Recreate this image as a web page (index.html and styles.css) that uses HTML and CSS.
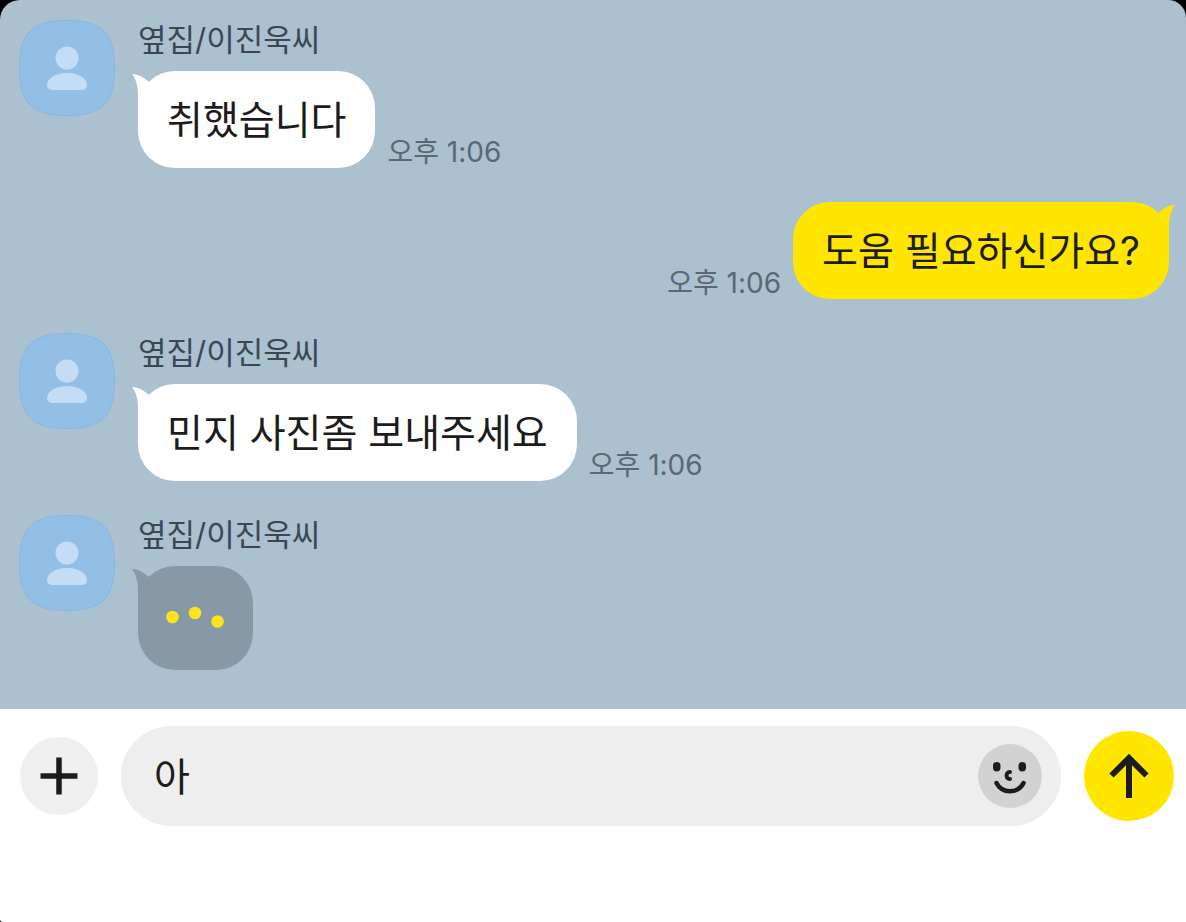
FILE: index.html
```html
<!DOCTYPE html>
<html lang="ko">
<head>
    <meta charset="UTF-8">
    <meta name="viewport" content="width=device-width, initial-scale=1.0">
    <title>옆집/이진욱씨</title>
    <link rel="stylesheet" href="styles.css">
</head>
<body>
    <!-- Shared shapes -->
    <svg class="sprite" aria-hidden="true">
        <symbol id="avatar" viewBox="0 0 96 96">
            <path d="M48 .5C83 .5 95.500 13 95.500 48S83 95.500 48 95.500 .5 83 .5 48 13 .5 48 .5Z" fill="#93bfe7" stroke="#89b6e0"/>
            <circle cx="48" cy="38" r="11.500" fill="#c5dcf5"/>
            <path d="M48 53C36 53 28 59 28 65C28 68.500 30.500 70 34 70H62C65.500 70 68 68.500 68 65C68 59 60 53 48 53Z" fill="#c5dcf5"/>
        </symbol>
        <symbol id="tail" viewBox="0 0 24 36">
            <path d="M0 0C7 0 12 4 17 8L24 18L18 36H6V22C6 12 4 5 0 0Z" fill="currentColor"/>
        </symbol>
    </svg>

    <main class="chat">
        <div class="message">
            <svg class="avatar"><use href="#avatar"/></svg>
            <div class="content">
                <p class="name">옆집/이진욱씨</p>
                <div class="line">
                    <p class="bubble"><svg class="tail"><use href="#tail"/></svg>취했습니다</p>
                    <time class="time">오후 1:06</time>
                </div>
            </div>
        </div>

        <div class="message mine">
            <div class="line">
                <p class="bubble"><svg class="tail"><use href="#tail"/></svg>도움 필요하신가요?</p>
                <time class="time">오후 1:06</time>
            </div>
        </div>

        <div class="message">
            <svg class="avatar"><use href="#avatar"/></svg>
            <div class="content">
                <p class="name">옆집/이진욱씨</p>
                <div class="line">
                    <p class="bubble"><svg class="tail"><use href="#tail"/></svg>민지 사진좀 보내주세요</p>
                    <time class="time">오후 1:06</time>
                </div>
            </div>
        </div>

        <!-- Typing indicator -->
        <div class="message">
            <svg class="avatar"><use href="#avatar"/></svg>
            <div class="content">
                <p class="name">옆집/이진욱씨</p>
                <div class="line">
                    <div class="bubble typing">
                        <svg class="tail"><use href="#tail"/></svg>
                        <svg class="dots" viewBox="0 0 59 24" fill="#fbe41c">
                            <circle cx="6.500" cy="11" r="6.300"/>
                            <circle cx="29" cy="7" r="6.300"/>
                            <circle cx="51.500" cy="15.500" r="6.300"/>
                        </svg>
                    </div>
                </div>
            </div>
        </div>
    </main>

    <form class="composer">
        <button class="plus" type="button" aria-label="추가">
            <svg width="38" height="38" viewBox="0 0 38 38" fill="none" stroke="#1c1c1c" stroke-width="5.500">
                <path d="M19 .5V37.500M.5 19H37.500"/>
            </svg>
        </button>
        <div class="field">
            <input type="text" value="아" aria-label="메시지">
            <button class="emoji" type="button" aria-label="이모티콘">
                <svg width="64" height="64" viewBox="0 0 64 64" fill="none" stroke="#1c1c1c" stroke-width="4" stroke-linecap="round">
                    <rect x="15" y="18" width="7.500" height="9.500" rx="3.700" fill="#1c1c1c" stroke="none"/>
                    <rect x="40.500" y="18" width="7.500" height="9.500" rx="3.700" fill="#1c1c1c" stroke="none"/>
                    <path d="M32 28C27.500 27.500 27.500 35.500 32 35"/>
                    <path d="M18.500 39C24 50 40 50 45.500 39" stroke-width="4.500"/>
                </svg>
            </button>
        </div>
        <button class="send" type="submit" aria-label="전송">
            <svg width="40" height="44" viewBox="0 0 40 44" fill="none" stroke="#1c1c1c" stroke-width="6">
                <path d="M20 4V44M2.500 21.500L20 4L37.500 21.500"/>
            </svg>
        </button>
    </form>
</body>
</html>
```
FILE: styles.css
```css
:root {
    --chat-color: #abc1d0;
    --mine-color: #ffe600;
    --typing-color: #8799a7;
    --text-color: #1c1c1c;
}

* {
    margin: 0;
    padding: 0;
    box-sizing: border-box;
    font-family: Inter, 'Noto Sans CJK KR', sans-serif;
}

body {
    display: flex;
    flex-direction: column;
    min-height: 100vh;
    background: #000;
    color: var(--text-color);
}

.sprite {
    display: none;
}

.chat {
    display: flex;
    flex-direction: column;
    gap: 34px;
    padding: 20px 17px 39px 19px;
    background: var(--chat-color);
    border-radius: 20px 18px 0 0;
}

.message {
    display: flex;
    align-items: flex-start;
    gap: 23px;
}

.avatar {
    flex: none;
    width: 96px;
    height: 96px;
}

.name {
    margin-bottom: 11px;
    font-size: 31px;
    line-height: 40px;
    color: #3b4854;
}

.line {
    display: flex;
    align-items: flex-end;
    gap: 12px;
}

.bubble {
    position: relative;
    padding: 24px 29px;
    border-radius: 37px;
    background: #fff;
    font-size: 39px;
    line-height: 49px;
}

.tail {
    position: absolute;
    top: 3px;
    left: -6px;
    width: 24px;
    height: 36px;
    color: #fff;
}

.time {
    font-size: 28px;
    line-height: 32px;
    color: #596875;
}

.mine {
    justify-content: flex-end;
}

.mine .line {
    flex-direction: row-reverse;
}

.mine .bubble {
    background: var(--mine-color);
}

.mine .tail {
    left: auto;
    right: -6px;
    color: var(--mine-color);
    transform: scaleX(-1);
}

.typing {
    padding: 40px 28px;
    background: var(--typing-color);
}

.typing .tail {
    color: var(--typing-color);
}

.dots {
    display: block;
    width: 59px;
    height: 24px;
}

.composer {
    flex: 1;
    display: flex;
    align-items: flex-start;
    gap: 23px;
    padding: 17px 12px 17px 20px;
    background: #fff;
    border-radius: 0 0 0 3px;
}

button {
    flex: none;
    display: flex;
    justify-content: center;
    align-items: center;
    border: none;
    border-radius: 50%;
    cursor: pointer;
}

.plus {
    width: 78px;
    height: 78px;
    margin: 11px 0;
    background: #efefef;
}

.field {
    flex: 1;
    display: flex;
    align-items: center;
    height: 100px;
    padding: 0 19px 0 33px;
    border-radius: 50px;
    background: #eee;
}

.field input {
    flex: 1;
    min-width: 0;
    padding-bottom: 4px;
    border: none;
    outline: none;
    background: none;
    color: var(--text-color);
    font-size: 39px;
}

.emoji {
    width: 64px;
    height: 64px;
    background: #d2d2d2;
}

.send {
    width: 90px;
    height: 90px;
    margin: 5px 0;
    background: var(--mine-color);
}
```
